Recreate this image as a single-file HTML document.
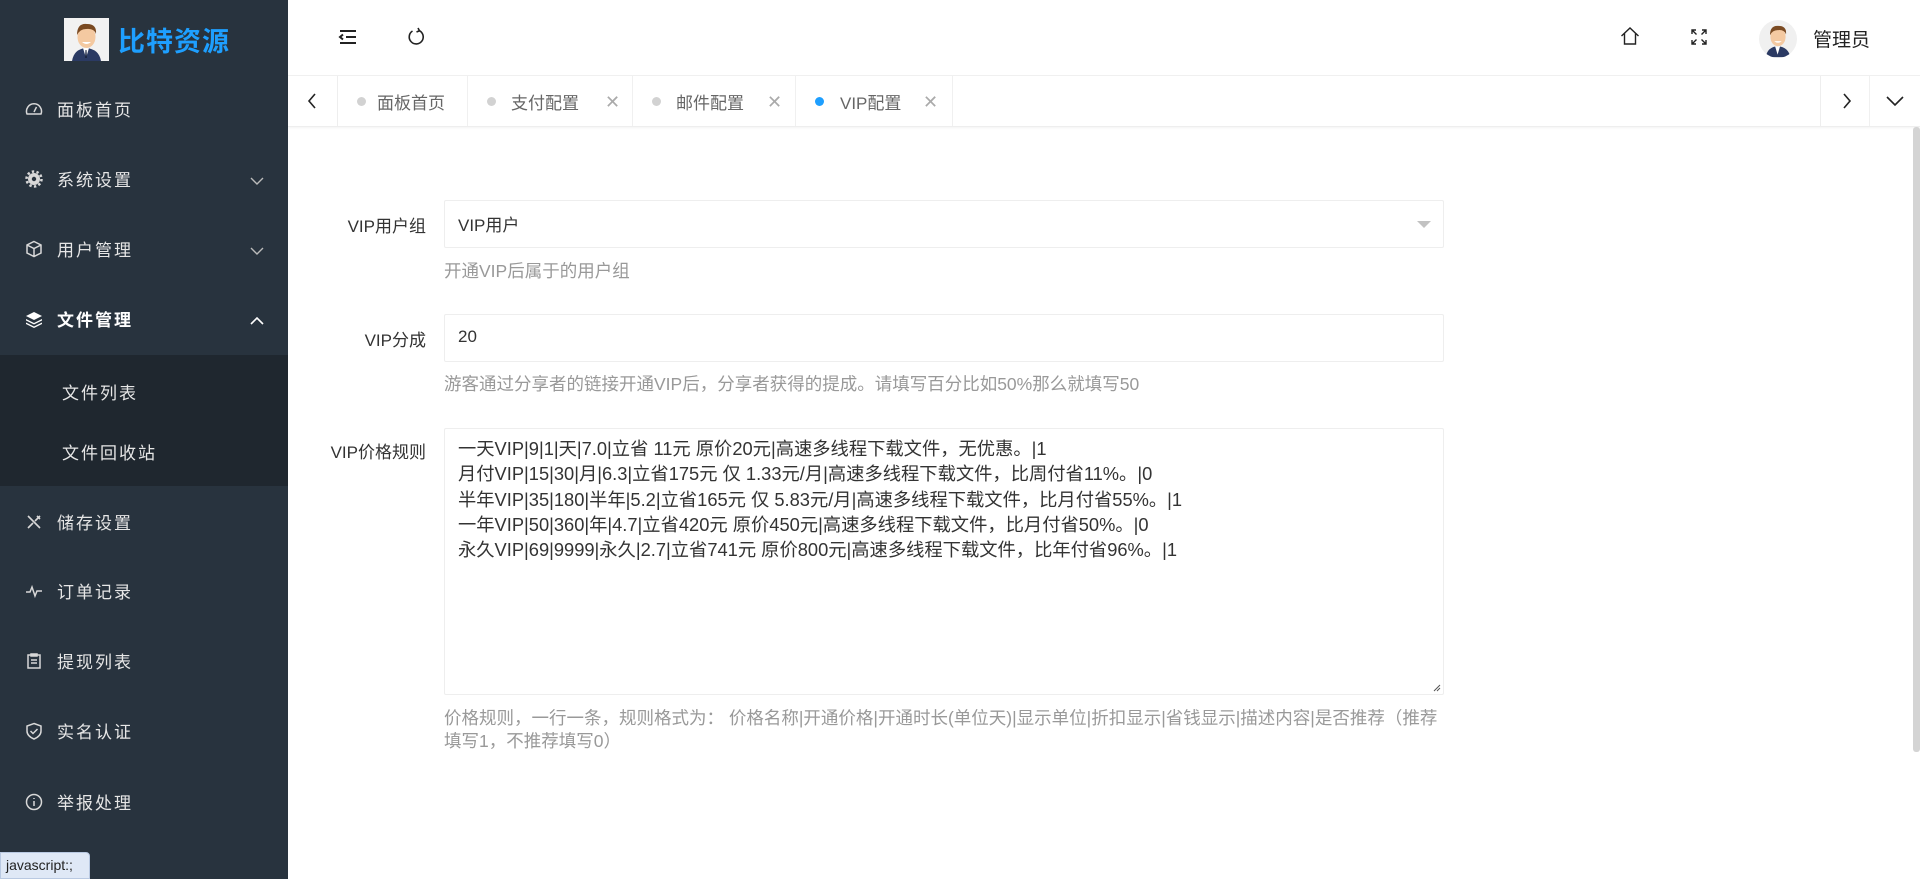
<!DOCTYPE html>
<html><head><meta charset="utf-8">
<style>
*{margin:0;padding:0;box-sizing:border-box}
body{width:1920px;height:879px;overflow:hidden;font-family:"Liberation Sans","Noto Sans CJK SC",sans-serif;background:#fff;position:relative;color:#333}
.side{position:absolute;left:0;top:0;width:288px;height:879px;background:#28333e}
.logo{height:76px;position:relative}
.logo .img{position:absolute;left:64px;top:18px;width:45px;height:43px;background:#f2f2f2;overflow:hidden}
.logo .t{position:absolute;left:118px;top:20px;font-size:27px;font-weight:bold;color:#1e9fff;letter-spacing:1px}
.mi{position:absolute;left:0;width:288px;height:70px;color:#e6e6e6;font-size:17px;letter-spacing:2px}
.mi .ic{position:absolute;left:25px;top:26px;width:18px;height:18px}
.mi .tx{position:absolute;left:57px;top:22px}
.mi .ar{position:absolute;right:24px;top:32px}
.sub{position:absolute;left:0;top:355px;width:288px;height:131px;background:#1f272f}
.sub div{position:absolute;left:62px;color:#e6e6e6;font-size:17px;letter-spacing:2px}
.tip{position:absolute;left:0;top:852px;width:90px;height:27px;background:#dfe8f6;border:1px solid #b9c9e2;border-radius:0 4px 0 0;font-size:14px;color:#222;padding:4px 0 0 5px}
.hd{position:absolute;left:288px;top:0;right:0;height:76px;border-bottom:1px solid #f0f0f0}
.tabs{position:absolute;left:288px;top:76px;right:0;height:51px;border-bottom:1px solid #eee;box-shadow:0 1px 2px rgba(0,0,0,.05)}
.tab{position:absolute;top:0;height:50px;border-right:1px solid #f0f0f0;font-size:17px;color:#666}
.tab .d{position:absolute;top:21px;width:9px;height:9px;border-radius:50%;background:#d2d2d2}
.tab span{position:absolute;top:13px}
.tab .x{position:absolute;top:16px;color:#aaa;font-size:18px}
.lb{position:absolute;width:140px;text-align:right;left:286px;font-size:17px;color:#333}
.in{position:absolute;left:444px;width:1000px;border:1px solid #eee;border-radius:2px;background:#fff;font-size:17px;color:#333}
.help{position:absolute;left:444px;width:1000px;font-size:17.5px;color:#999;line-height:23px}
</style></head><body>
<div class="side">
 <div class="logo">
  <div class="img"><svg width="45" height="43" viewBox="0 0 45 43"><path d="M8 43 Q10 31 22 30 Q35 31 37 43Z" fill="#2b3a63"/><path d="M19 30 L22 40 L25 30Z" fill="#fff"/><path d="M21.5 32 L22.5 32 L23 40 L21 40Z" fill="#1b2540"/><ellipse cx="22.5" cy="19" rx="9" ry="11" fill="#f4c9a1"/><path d="M13 17 Q13 5 23 6 Q33 6 32 16 Q30 10 22 11 Q16 11 13 17Z" fill="#7a4a22"/><path d="M18 24 Q22.5 28 27 24Z" fill="#fff"/></svg></div>
  <div class="t">比特资源</div>
 </div>
 <div class="mi" style="top:74px"><svg class="ic" viewBox="0 0 18 18" fill="none" stroke="#d8d8d8" stroke-width="1.5"><path d="M2 14 A7.5 7.5 0 1 1 16 14 Z"/><path d="M9 12 L11.5 7"/></svg><span class="tx">面板首页</span></div>
 <div class="mi" style="top:144px"><svg class="ic" viewBox="0 0 18 18"><circle cx="9" cy="9" r="6" fill="#d8d8d8"/><circle cx="9" cy="9" r="7.5" fill="none" stroke="#d8d8d8" stroke-width="2.5" stroke-dasharray="2.4 2.3"/><circle cx="9" cy="9" r="2.2" fill="#28333e"/></svg><span class="tx">系统设置</span><svg class="ar" width="14" height="10" viewBox="0 0 14 10"><path d="M1 2 L7 8 L13 2" fill="none" stroke="#bbb" stroke-width="1.4"/></svg></div>
 <div class="mi" style="top:214px"><svg class="ic" viewBox="0 0 18 18" fill="none" stroke="#d8d8d8" stroke-width="1.5"><path d="M9 1.5 L16 5 L16 13 L9 16.5 L2 13 L2 5Z M2 5 L9 8.5 L16 5 M9 8.5 L9 16.5"/></svg><span class="tx">用户管理</span><svg class="ar" width="14" height="10" viewBox="0 0 14 10"><path d="M1 2 L7 8 L13 2" fill="none" stroke="#bbb" stroke-width="1.4"/></svg></div>
 <div class="mi" style="top:284px;color:#fff;font-weight:bold"><svg class="ic" viewBox="0 0 18 18" fill="#fff"><path d="M9 2 L17 6 L9 10 L1 6Z"/><path d="M1 9 L9 13 L17 9 L17 10.5 L9 14.5 L1 10.5Z"/><path d="M1 12.5 L9 16.5 L17 12.5 L17 14 L9 18 L1 14Z"/></svg><span class="tx">文件管理</span><svg class="ar" width="14" height="10" viewBox="0 0 14 10"><path d="M1 8 L7 2 L13 8" fill="none" stroke="#fff" stroke-width="1.6"/></svg></div>
 <div class="sub"><div style="top:24px">文件列表</div><div style="top:84px">文件回收站</div></div>
 <div class="mi" style="top:487px"><svg class="ic" viewBox="0 0 18 18" fill="none" stroke="#d8d8d8" stroke-width="1.6"><path d="M3 3 L15 15 M3 15 L8 10 M10 8 L15 3 M12 3 L15 6"/></svg><span class="tx">储存设置</span></div>
 <div class="mi" style="top:556px"><svg class="ic" viewBox="0 0 18 18" fill="none" stroke="#d8d8d8" stroke-width="1.5"><path d="M1 10 L5 10 L7 5 L10 14 L12 9 L17 9"/></svg><span class="tx">订单记录</span></div>
 <div class="mi" style="top:626px"><svg class="ic" viewBox="0 0 18 18" fill="none" stroke="#d8d8d8" stroke-width="1.5"><path d="M3 3 L15 3 L15 16 L3 16Z M6 2 L12 2 L12 4 L6 4Z M6 8 L12 8 M6 11 L12 11"/></svg><span class="tx">提现列表</span></div>
 <div class="mi" style="top:696px"><svg class="ic" viewBox="0 0 18 18" fill="none" stroke="#d8d8d8" stroke-width="1.5"><path d="M9 1.5 L16 4 L16 9 Q16 14 9 17 Q2 14 2 9 L2 4Z"/><path d="M5.5 9 L8 11.5 L12.5 7"/></svg><span class="tx">实名认证</span></div>
 <div class="mi" style="top:767px"><svg class="ic" viewBox="0 0 18 18" fill="none" stroke="#d8d8d8" stroke-width="1.5"><circle cx="9" cy="9" r="7.5"/><path d="M9 8 L9 13 M9 5 L9 6"/></svg><span class="tx">举报处理</span></div>
</div>
<div class="tip">javascript:;</div>

<div class="hd">
 <svg style="position:absolute;left:50px;top:29px" width="20" height="16" viewBox="0 0 20 16" fill="none" stroke="#222" stroke-width="2"><path d="M2 2 L18 2 M8 8 L18 8 M2 14 L18 14 M5 5.5 L2 8 L5 10.5"/></svg>
 <svg style="position:absolute;left:118px;top:27px" width="20" height="20" viewBox="0 0 20 20" fill="none" stroke="#222" stroke-width="1.6"><path d="M13 3.5 A7 7 0 1 1 6.5 4"/><path d="M12 1 L13.5 3.8 L10.5 5"/></svg>
 <svg style="position:absolute;left:1332px;top:26px" width="20" height="20" viewBox="0 0 20 20" fill="none" stroke="#222" stroke-width="1.4"><path d="M1.5 10 L10 2 L18.5 10 M4.5 7.5 L4.5 18 L15.5 18 L15.5 7.5"/></svg>
 <svg style="position:absolute;left:1403px;top:29px" width="16" height="16" viewBox="0 0 16 16" fill="none" stroke="#222" stroke-width="1.4"><path d="M1 5 L1 1 L5 1 M1 1 L5.5 5.5 M11 1 L15 1 L15 5 M15 1 L10.5 5.5 M1 11 L1 15 L5 15 M1 15 L5.5 10.5 M15 11 L15 15 L11 15 M15 15 L10.5 10.5"/></svg>
 <div style="position:absolute;left:1471px;top:20px;width:38px;height:38px;border-radius:50%;background:#f0f0f0;overflow:hidden"><svg width="38" height="38" viewBox="0 0 45 43"><path d="M8 43 Q10 31 22 30 Q35 31 37 43Z" fill="#2b3a63"/><path d="M19 30 L22 40 L25 30Z" fill="#fff"/><ellipse cx="22.5" cy="19" rx="9" ry="11" fill="#f4c9a1"/><path d="M13 17 Q13 5 23 6 Q33 6 32 16 Q30 10 22 11 Q16 11 13 17Z" fill="#7a4a22"/><path d="M18 24 Q22.5 28 27 24Z" fill="#fff"/></svg></div>
 <div style="position:absolute;left:1525px;top:25px;font-size:19px;color:#222">管理员</div>
</div>

<div class="tabs">
 <div class="tab" style="left:0;width:50px;border-right:1px solid #eee"><svg style="position:absolute;left:19px;top:17px" width="10" height="16" viewBox="0 0 10 16"><path d="M8 1 L2 8 L8 15" fill="none" stroke="#222" stroke-width="1.6"/></svg></div>
 <div class="tab" style="left:51px;width:129px"><i class="d" style="left:18px"></i><span style="left:38px">面板首页</span></div>
 <div class="tab" style="left:180px;width:165px"><i class="d" style="left:19px"></i><span style="left:43px">支付配置</span><span class="x" style="left:137px">✕</span></div>
 <div class="tab" style="left:345px;width:163px"><i class="d" style="left:19px"></i><span style="left:43px">邮件配置</span><span class="x" style="left:134px">✕</span></div>
 <div class="tab" style="left:508px;width:157px"><i class="d" style="left:19px;background:#1e9fff"></i><span style="left:44px">VIP配置</span><span class="x" style="left:127px">✕</span></div>
 <div class="tab" style="left:1532px;width:50px;border-left:1px solid #eee"><svg style="position:absolute;left:21px;top:17px" width="10" height="16" viewBox="0 0 10 16"><path d="M2 1 L8 8 L2 15" fill="none" stroke="#222" stroke-width="1.6"/></svg></div>
 <div class="tab" style="left:1582px;width:50px;border-right:none"><svg style="position:absolute;left:16px;top:20px" width="18" height="11" viewBox="0 0 18 11"><path d="M1 1 L9 9 L17 1" fill="none" stroke="#222" stroke-width="1.6"/></svg></div>
</div>
<div style="position:absolute;left:1913px;top:127px;width:7px;height:625px;background:#d4d4d4;border-radius:3px"></div>

<div class="lb" style="top:212px">VIP用户组</div>
<div class="in" style="top:200px;height:48px;padding:10px 0 0 13px">VIP用户<svg style="position:absolute;right:12px;top:20px" width="14" height="8" viewBox="0 0 14 8"><path d="M0 0 L14 0 L7 7Z" fill="#c2c2c2"/></svg></div>
<div class="help" style="top:260px">开通VIP后属于的用户组</div>

<div class="lb" style="top:326px">VIP分成</div>
<div class="in" style="top:314px;height:48px;padding:12px 0 0 13px">20</div>
<div class="help" style="top:373px">游客通过分享者的链接开通VIP后，分享者获得的提成。请填写百分比如50%那么就填写50</div>

<div class="lb" style="top:438px">VIP价格规则</div>
<div class="in" style="top:428px;height:267px;padding:7px 0 0 13px;line-height:25.3px;font-size:18.3px">一天VIP|9|1|天|7.0|立省 11元 原价20元|高速多线程下载文件，无优惠。|1<br>月付VIP|15|30|月|6.3|立省175元 仅 1.33元/月|高速多线程下载文件，比周付省11%。|0<br>半年VIP|35|180|半年|5.2|立省165元 仅 5.83元/月|高速多线程下载文件，比月付省55%。|1<br>一年VIP|50|360|年|4.7|立省420元 原价450元|高速多线程下载文件，比月付省50%。|0<br>永久VIP|69|9999|永久|2.7|立省741元 原价800元|高速多线程下载文件，比年付省96%。|1<svg style="position:absolute;right:2px;bottom:2px" width="9" height="9" viewBox="0 0 9 9"><path d="M8 2 L2 8 M8 5 L5 8" stroke="#555" stroke-width="1"/></svg></div>
<div class="help" style="top:707px">价格规则，一行一条，规则格式为： 价格名称|开通价格|开通时长(单位天)|显示单位|折扣显示|省钱显示|描述内容|是否推荐（推荐填写1，不推荐填写0）</div>
</body></html>
